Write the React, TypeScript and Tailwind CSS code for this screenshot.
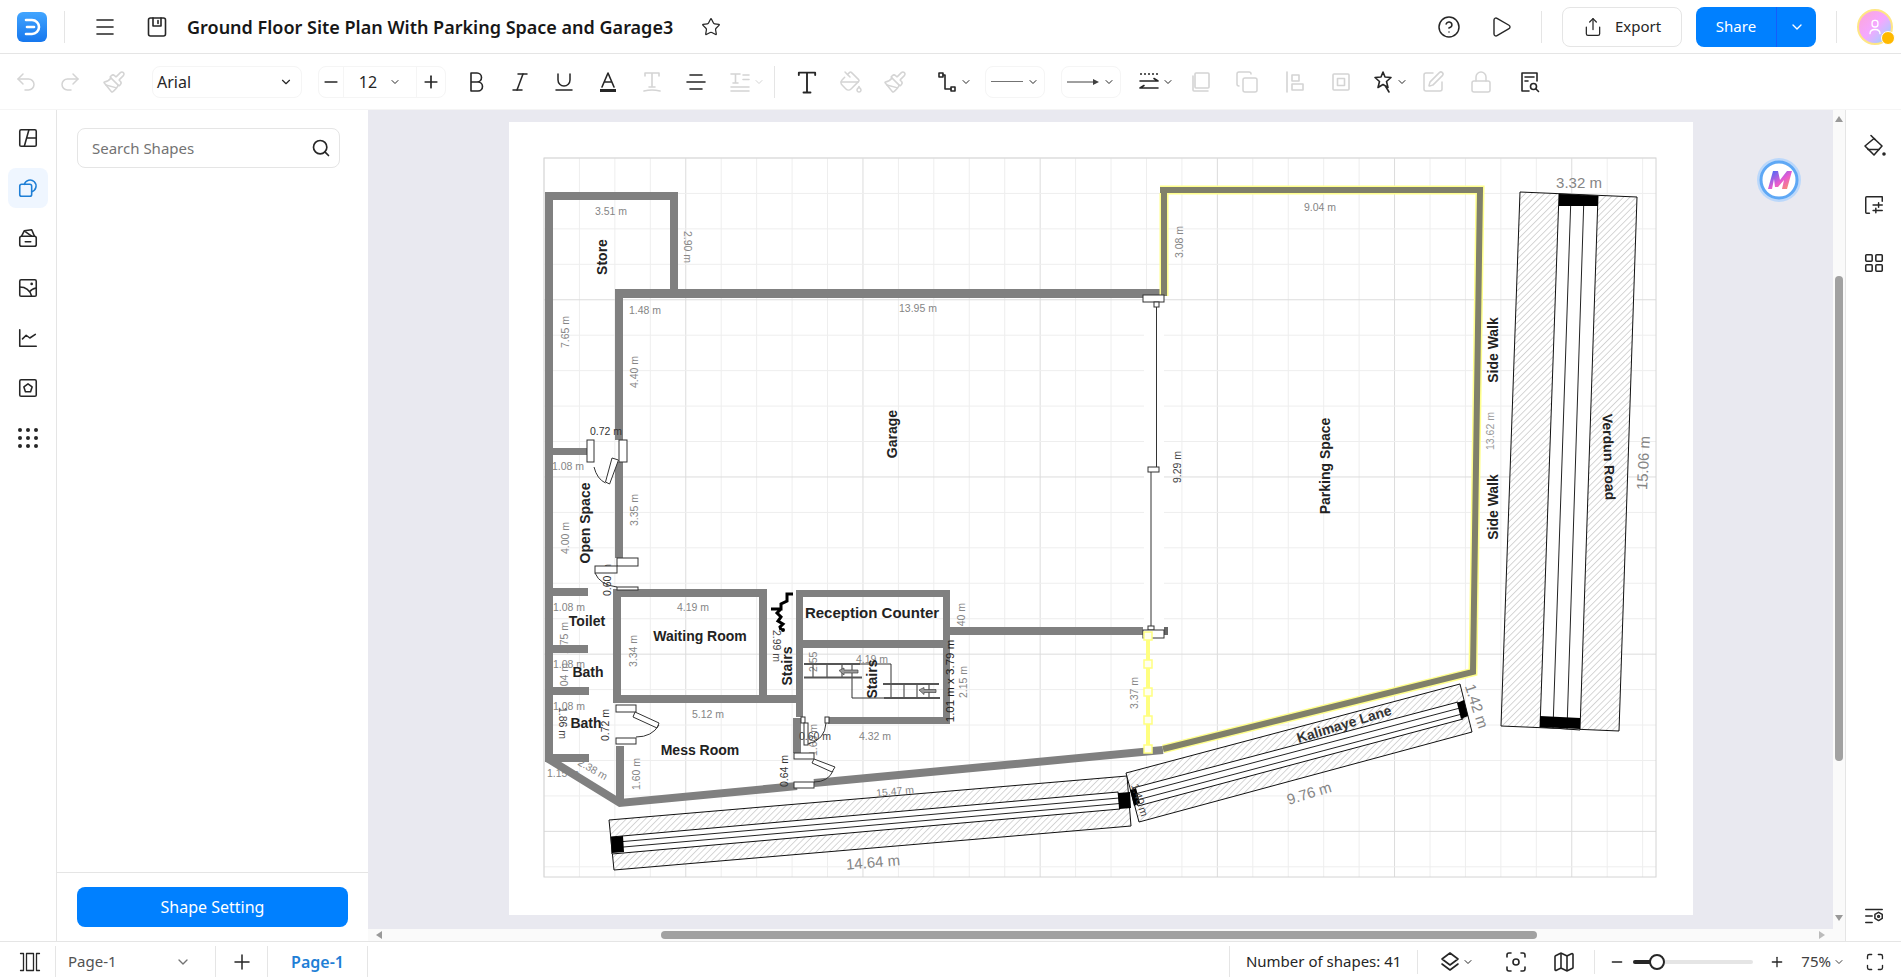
import type { ReactNode } from "react";
import {
  ChevronDown, CircleHelp, Copy, Focus, Italic, LayoutGrid, Lock, Map as MapIcon, Maximize, Menu, Minus, PaintBucket,
  Paintbrush, Play, Plus, Redo2, Search, Share, SquarePen, Star, Underline, Undo2,
} from "lucide-react";

const DISABLED = "text-neutral-300";
const ACTIVE = "text-neutral-800";

function Ico({ children, className = "w-6 h-6", sw = 1.6 }: { children: ReactNode; className?: string; sw?: number }) {
  return (
    <svg viewBox="0 0 24 24" fill="none" stroke="currentColor" strokeWidth={sw} strokeLinecap="round" strokeLinejoin="round" className={className}>
      {children}
    </svg>
  );
}

function Cell({ children, className = "w-11" }: { children: ReactNode; className?: string }) {
  return <div className={`h-11 flex items-center justify-center shrink-0 ${className}`}>{children}</div>;
}

function ChevCell({ children, tone = ACTIVE, className = "w-12" }: { children: ReactNode; tone?: string; className?: string }) {
  return (
    <div className={`h-11 flex items-center justify-center gap-px shrink-0 ${tone} ${className}`}>
      {children}
      <ChevronDown className="w-3 h-3" />
    </div>
  );
}

function Header() {
  return (
    <header className="h-[54px] shrink-0 flex items-center border-b border-neutral-200 pl-4 pr-2">
      <svg viewBox="0 0 32 32" className="w-8 h-8">
        <defs>
          <linearGradient id="lg" x1="0" y1="0" x2="0" y2="1">
            <stop offset="0" stopColor="#42a5ff" />
            <stop offset="1" stopColor="#1677ee" />
          </linearGradient>
        </defs>
        <rect x="1" y="1" width="30" height="30" rx="6" fill="url(#lg)" />
        <path d="M10 9h6a7 7 0 0 1 0 14h-6" fill="none" stroke="#fff" strokeWidth="2.6" strokeLinecap="round" />
        <path d="M11 16h7" stroke="#fff" strokeWidth="2.6" strokeLinecap="round" />
      </svg>
      <div className="w-px h-8 bg-neutral-200 ml-4" />
      <Menu className="w-6 h-6 ml-7 text-neutral-800" strokeWidth={1.6} />
      <Ico className="w-6 h-6 ml-7 text-neutral-800">
        <rect x="3.5" y="3" width="17" height="18" rx="2" />
        <path d="M8 3v8h8V3M13 5.5v3" />
      </Ico>
      <h1 className="ml-4.5 text-lg font-semibold text-neutral-900 whitespace-nowrap">Ground Floor Site Plan With Parking Space and Garage3</h1>
      <Star className="w-5 h-5 ml-7 text-neutral-800" strokeWidth={1.5} />

      <div className="ml-auto flex items-center">
        <CircleHelp className="w-6 h-6 text-neutral-800" strokeWidth={1.5} />
        <Play className="w-6 h-6 ml-7 text-neutral-800" strokeWidth={1.4} />
        <div className="w-px h-8 bg-neutral-200 ml-7" />
        <button className="ml-5 w-30 h-10 flex items-center justify-center gap-3 rounded-lg border border-neutral-200 text-[15px] text-neutral-800">
          <Share className="w-5 h-5" strokeWidth={1.5} />
          Export
        </button>
        <div className="ml-3.5 w-30 h-10 flex items-center rounded-lg bg-[#0080ff] text-white text-[15px]">
          <span className="flex-1 text-center">Share</span>
          <span className="w-10 h-full flex items-center justify-center border-l border-blue-600">
            <ChevronDown className="w-4 h-4" />
          </span>
        </div>
        <div className="w-px h-8 bg-neutral-200 ml-5" />
        <div className="relative ml-5 w-9 h-9 rounded-full border-2 border-amber-200 bg-linear-to-br from-pink-300 via-fuchsia-300 to-sky-300 flex items-center justify-center">
          <Ico className="w-5 h-5 text-white">
            <rect x="8.5" y="4" width="7" height="8" rx="3" />
            <path d="M6 20c0-4 3-5 6-5s6 1 6 5" />
          </Ico>
          <span className="absolute -right-1 -bottom-0.5 w-3.5 h-3.5 rounded-full bg-amber-400 border border-white" />
        </div>
      </div>
    </header>
  );
}

function Toolbar() {
  return (
    <div className="h-14 shrink-0 flex items-center border-b border-neutral-100 px-1 text-neutral-800">
      <Cell><Undo2 className={`w-6 h-6 ${DISABLED}`} strokeWidth={1.5} /></Cell>
      <Cell><Redo2 className={`w-6 h-6 ${DISABLED}`} strokeWidth={1.5} /></Cell>
      <Cell><Paintbrush className={`w-6 h-6 ${DISABLED}`} strokeWidth={1.5} /></Cell>

      <div className="ml-4 w-[150px] h-8 flex items-center justify-between rounded-lg border border-neutral-100 px-1 text-base text-neutral-800">
        Arial
        <ChevronDown className="w-3.5 h-3.5 mr-1" />
      </div>
      <div className="ml-4 w-32 h-8 flex items-center rounded-lg border border-neutral-100">
        <span className="w-6 flex justify-center"><Minus className="w-5 h-5" /></span>
        <span className="flex-1 h-full flex items-center justify-center gap-3 border-x border-neutral-100 text-base">
          12
          <ChevronDown className="w-3 h-3" />
        </span>
        <span className="w-7 flex justify-center"><Plus className="w-5 h-5" /></span>
      </div>

      <Cell className="w-11 ml-2">
        <Ico><path d="M7 3h6a4.500 4.500 0 0 1 0 9H7zM7 12h7a4.500 4.500 0 0 1 0 9H7z" /></Ico>
      </Cell>
      <Cell><Italic className="w-6 h-6" strokeWidth={1.5} /></Cell>
      <Cell><Underline className="w-6 h-6" strokeWidth={1.5} /></Cell>
      <Cell>
        <Ico>
          <path d="M6 17 12 3l6 14M8.500 12h7" />
          <rect x="4" y="19" width="16" height="3" fill="currentColor" stroke="none" />
        </Ico>
      </Cell>
      <Cell>
        <Ico className={`w-6 h-6 ${DISABLED}`}>
          <path d="M5 6V3h14v3M12 3v14M9 17h6M4 21q8-2 16 0" />
        </Ico>
      </Cell>
      <Cell><Ico><path d="M6 5h12M3 12h18M6 19h12" /></Ico></Cell>
      <ChevCell tone={DISABLED} className="w-14">
        <Ico>
          <path d="M3 4h9M7.500 4v9M5 13h5M15 5h6M15 9.500h6M3 17h18M3 21h18" />
        </Ico>
      </ChevCell>
      <div className="w-px h-8 bg-neutral-200" />

      <Cell className="w-11 ml-2.5">
        <Ico className="w-7 h-7"><path d="M5 6V4h14v2M12 4v17M9 21h6" /></Ico>
      </Cell>
      <Cell><PaintBucket className={`w-6 h-6 ${DISABLED}`} strokeWidth={1.5} /></Cell>
      <Cell><Paintbrush className={`w-6 h-6 ${DISABLED}`} strokeWidth={1.5} /></Cell>
      <ChevCell className="w-14 ml-2">
        <Ico>
          <rect x="4" y="3" width="4" height="4" />
          <rect x="16" y="17" width="4" height="4" />
          <path d="M8 5h2v14h6" />
        </Ico>
      </ChevCell>
      <div className="ml-1 w-15 h-8 flex items-center justify-center gap-1 rounded-lg border border-neutral-100">
        <span className="w-8 h-px bg-neutral-500" />
        <ChevronDown className="w-3 h-3" />
      </div>
      <div className="ml-4 w-15 h-8 flex items-center justify-center gap-1 rounded-lg border border-neutral-100">
        <svg viewBox="0 0 32 8" className="w-8 h-2">
          <path d="M0 4h27" stroke="#404040" />
          <path d="M26 1l6 3-6 3z" fill="#404040" />
        </svg>
        <ChevronDown className="w-3 h-3" />
      </div>
      <ChevCell className="w-12 ml-2.5">
        <Ico>
          <path d="M3 4h18" strokeDasharray="2 2" strokeLinecap="butt" />
          <path d="M3 11h18M17 8.500 21 11M3 18h18M7 15.500 3 18" />
        </Ico>
      </ChevCell>
      <Cell className="w-11">
        <Ico className={`w-6 h-6 ${DISABLED}`}><rect x="6" y="3" width="14" height="15" rx="1" /><path d="M4 6v14q0 1 1 1h14" /></Ico>
      </Cell>
      <Cell className="w-12"><Copy className={`w-6 h-6 ${DISABLED}`} strokeWidth={1.5} /></Cell>
      <Cell className="w-12">
        <Ico className={`w-6 h-6 ${DISABLED}`}><path d="M4 2v20" /><rect x="9" y="5" width="7" height="6" /><rect x="9" y="14" width="11" height="6" /></Ico>
      </Cell>
      <Cell>
        <Ico className={`w-6 h-6 ${DISABLED}`}><rect x="4" y="4" width="16" height="16" rx="1" /><rect x="8.500" y="8.500" width="7" height="7" /></Ico>
      </Cell>
      <ChevCell className="w-11 ml-1">
        <Ico>
          <path d="m12 2 2 5 6 .500-4.500 4 1.500 6-5-3-5 3 1.500-6L4 7.500 10 7z" />
          <path d="m15 17 3 5" />
        </Ico>
      </ChevCell>
      <Cell><SquarePen className={`w-6 h-6 ${DISABLED}`} strokeWidth={1.5} /></Cell>
      <Cell className="w-11 ml-1"><Lock className={`w-6 h-6 ${DISABLED}`} strokeWidth={1.5} /></Cell>
      <Cell className="w-11 ml-1">
        <Ico>
          <path d="M20 11V3H5v18h7" />
          <path d="M8 7h9M8 11h3" />
          <circle cx="16.500" cy="16.500" r="3" />
          <path d="m19 19 2.500 2.500" />
        </Ico>
      </Cell>
    </div>
  );
}

const railIcons: ReactNode[] = [
  <><rect x="3" y="3" width="18" height="18" rx="1.500" /><path d="M13 3 8 21M11 12h10" /></>,
  <><rect x="3" y="8" width="13" height="13" rx="2" /><path d="M8 8a6.500 6.500 0 1 1 8 8" /></>,
  <><rect x="3" y="10" width="18" height="11" rx="2" /><path d="M9 16h6M5 10l3-6 8-1 3 7M9 5l7 5" /></>,
  <><rect x="3" y="3" width="18" height="18" rx="1.500" /><path d="M3 11q10 0 13 10M14 16q2-3 7-4" /><circle cx="16" cy="7.500" r=".6" fill="currentColor" /></>,
  <><path d="M3 3v18h18" /><path d="m6 13 4-4 4 3 6-4" /></>,
  <><rect x="3" y="3" width="18" height="18" rx="1.500" /><path d="m12 7.500 4.500 3.300-1.700 5.200H9.200l-1.700-5.200z" /></>,
];

function Rail() {
  return (
    <div className="w-14 box-content shrink-0 flex flex-col items-center gap-0.5 pt-1 border-r border-neutral-200 text-neutral-800">
      {railIcons.map((icon, i) => (
        <div key={i} className="h-12 flex items-center justify-center">
          <div className={`w-10 h-10 rounded-lg flex items-center justify-center ${i === 1 ? "bg-blue-50 text-[#1f7fd6]" : ""}`}>
            <Ico className="w-5.5 h-5.5" sw={1.7}>{icon}</Ico>
          </div>
        </div>
      ))}
      <div className="h-12 flex items-center justify-center">
        <div className="grid grid-cols-3 gap-1">
          {Array.from({ length: 9 }).map((_, i) => (
            <span key={i} className="w-1 h-1 rounded-full bg-neutral-800" />
          ))}
        </div>
      </div>
    </div>
  );
}

function ShapePanel() {
  return (
    <aside className="w-[311px] shrink-0 flex flex-col bg-white">
      <div className="flex-1 pt-4.5 pl-5 pr-7">
        <div className="h-10 flex items-center justify-between rounded-lg border border-neutral-200 pl-3.5 pr-2 text-[15px] text-neutral-500">
          Search Shapes
          <Search className="w-5 h-5 text-neutral-800" />
        </div>
      </div>
      <div className="border-t border-neutral-200 pl-5 pr-5 py-3.5">
        <button className="w-full h-10 rounded-lg bg-[#0080ff] text-white text-base">Shape Setting</button>
      </div>
    </aside>
  );
}

const WALL = "#808080";
const MINOR_X = Array.from({ length: 32 }, (_, i) => 544 + i * 35.44);
const MINOR_Y = Array.from({ length: 21 }, (_, i) => 158 + i * 35.44);

// x1, y1, x2, y2
const walls = [
  [545, 192, 678, 200], [545, 192, 553, 762], [670, 192, 678, 298], [615, 289, 1160, 298], [615, 289, 623, 440], [615, 462, 623, 558],
  [545, 448, 588, 455], [545, 588, 588, 596], [545, 645, 588, 653], [545, 687, 589, 695], [545, 754, 589, 762],
  [613, 589, 767, 597], [613, 589, 621, 703], [759, 589, 767, 697], [613, 695, 798, 703],
  [796, 590, 950, 597], [796, 590, 803, 717], [793, 718, 801, 753], [943, 590, 950, 724], [796, 640, 943, 648], [828, 717, 950, 724],
  [950, 627, 1143, 635], [616, 746, 624, 803],
];

// x, y, w, h
const doorRects = [
  [587, 440, 7, 22], [619, 440, 8, 22], [617, 558, 21, 8], [595, 566, 22, 7], [617, 587, 21, 3], [616, 705, 20, 7], [616, 738, 20, 6],
  [794, 753, 20, 6], [794, 782, 20, 6], [801, 717, 4, 6], [825, 717, 4, 6], [804, 723, 4, 22], [1143, 295, 21, 7], [1154, 302, 5, 5],
  [1148, 467, 11, 5], [1148, 626, 6, 4], [1143, 630, 21, 8],
];

const doorLeaves = [
  "612,458 618.500,460 609.600,484 605.500,482",
  "635,712 659,723 657,728 633,717",
  "814,759 835,767 832,772 812,763",
];

const doorArcs = [
  "M594 467Q597 479 605.500 483",
  "M595 573Q600 585 617 587",
  "M636 737Q652 737 659 725",
  "M814 782Q828 782 833 771",
  "M808 744Q825 740 826 723",
];

type Label = { t: string; x: number; y: number; r?: number; s?: number; c?: string; b?: boolean };

const DIM = "#858585";

// partly hidden by walls and doors in the drawing
const underLabels: Label[] = [
  { t: "2.40 m", x: 961, y: 619, r: -90 }, { t: "1.75 m", x: 564, y: 638, r: -90 }, { t: "1.04 m", x: 564, y: 679, r: -90 },
  { t: "2.55 m", x: 813, y: 656, r: -90 }, { t: "1.15 m", x: 563, y: 773 }, { t: "1.60 m", x: 813, y: 740, r: -90 },
  { t: "0.60 m", x: 607, y: 580, r: -90, c: "#333" },
];

const labels: Label[] = [
  { t: "3.51 m", x: 611, y: 211 }, { t: "1.48 m", x: 645, y: 310 }, { t: "13.95 m", x: 918, y: 308 }, { t: "0.72 m", x: 606, y: 431, c: "#333" },
  { t: "1.08 m", x: 568, y: 466 }, { t: "1.08 m", x: 569, y: 607 }, { t: "4.19 m", x: 693, y: 607 }, { t: "1.08 m", x: 569, y: 664 },
  { t: "1.08 m", x: 569, y: 706 }, { t: "5.12 m", x: 708, y: 714 }, { t: "4.32 m", x: 875, y: 736 }, { t: "4.19 m", x: 872, y: 659 },
  { t: "0.60 m", x: 815, y: 736, c: "#444" }, { t: "2.38 m", x: 593, y: 769, r: 30 },
  { t: "15.47 m", x: 895, y: 791, r: -5 }, { t: "14.64 m", x: 873, y: 862, r: -5, s: 15 }, { t: "9.04 m", x: 1320, y: 207 },
  { t: "3.32 m", x: 1579, y: 182, s: 15 }, { t: "9.76 m", x: 1309, y: 793, r: -17, s: 15 }, { t: "1.42 m", x: 1477, y: 706, r: 72, s: 15 },
  { t: "3.37 m", x: 1134, y: 693, r: -90 }, { t: "1.40 m", x: 1140, y: 800, r: 72, c: "#444", s: 11 },
  { t: "2.90 m", x: 688, y: 247, r: 90 }, { t: "7.65 m", x: 565, y: 332, r: -90 }, { t: "4.40 m", x: 634, y: 372, r: -90 }, { t: "4.00 m", x: 565, y: 538, r: -90 },
  { t: "3.35 m", x: 634, y: 510, r: -90 },
  { t: "3.34 m", x: 633, y: 651, r: -90 }, { t: "2.99 m", x: 777, y: 646, r: 90, c: "#444" },
  { t: "1.01 m x 3.79 m", x: 950, y: 681, r: -90, c: "#222", s: 11.5 }, { t: "2.15 m", x: 963, y: 682, r: -90 },
  { t: "1.86 m", x: 563, y: 723, r: 90, c: "#444" }, { t: "0.72 m", x: 605, y: 725, r: -90, c: "#333" },
  { t: "1.60 m", x: 636, y: 774, r: -90 }, { t: "0.64 m", x: 784, y: 771, r: -90, c: "#333" },
  { t: "3.08 m", x: 1179, y: 242, r: -90 }, { t: "9.29 m", x: 1177, y: 467, r: -90, c: "#444" }, { t: "13.62 m", x: 1490, y: 431, r: -90, c: "#999" },
  { t: "15.06 m", x: 1643, y: 463, r: -87, s: 15 },
  { t: "Store", x: 602, y: 257, r: -90, b: true }, { t: "Garage", x: 892, y: 434, r: -90, b: true }, { t: "Open Space", x: 585, y: 523, r: -90, b: true },
  { t: "Toilet", x: 587, y: 621, b: true }, { t: "Waiting Room", x: 700, y: 636, b: true }, { t: "Reception Counter", x: 872, y: 612, b: true, s: 15 },
  { t: "Bath", x: 588, y: 672, b: true }, { t: "Bath", x: 586, y: 723, b: true }, { t: "Mess Room", x: 700, y: 750, b: true },
  { t: "Stairs", x: 787, y: 666, r: -90, b: true }, { t: "Stairs", x: 872, y: 679, r: -90, b: true }, { t: "Parking Space", x: 1325, y: 466, r: -90, b: true },
  { t: "Side Walk", x: 1493, y: 350, r: -90, b: true }, { t: "Side Walk", x: 1493, y: 507, r: -90, b: true }, { t: "Verdun Road", x: 1609, y: 457, r: 88, b: true },
  { t: "Kalimaye Lane", x: 1344, y: 724, r: -17, b: true, c: "#333" },
];

function PlanText({ l }: { l: Label }) {
  return (
    <text
      x={l.x}
      y={l.y}
      textAnchor="middle"
      dominantBaseline="central"
      fontSize={l.s ?? (l.b ? 14 : 10.5)}
      fontWeight={l.b ? 700 : 400}
      fill={l.c ?? (l.b ? "#222" : DIM)}
      transform={l.r ? `rotate(${l.r} ${l.x} ${l.y})` : undefined}
    >
      {l.t}
    </text>
  );
}

function FloorPlan() {
  return (
    <svg viewBox="509 122 1184 793" className="w-full h-full" fontFamily="Liberation Sans, Arial, sans-serif">
      <defs>
        <pattern id="hatch" width="4.500" height="4.500" patternUnits="userSpaceOnUse" patternTransform="rotate(45)">
          <rect width="4.500" height="4.500" fill="#fff" />
          <path d="M0 0v4.500" stroke="#9a9a9a" strokeWidth="0.8" />
        </pattern>
      </defs>

      {MINOR_X.map((x, i) => (
        <path key={i} d={`M${x} 158V877`} stroke={(i - 4) % 5 === 0 ? "#dcdcdc" : "#eeeeee"} />
      ))}
      {MINOR_Y.map((y, i) => (
        <path key={i} d={`M544 ${y}H1656`} stroke={(i - 4) % 5 === 0 ? "#dcdcdc" : "#eeeeee"} />
      ))}
      <rect x="544" y="158" width="1112" height="719" fill="none" stroke="#d4d4d4" />
      <rect x="1144" y="299" width="20" height="333" fill="#fff" />

      {underLabels.map((l, i) => (
        <PlanText key={i} l={l} />
      ))}

      {walls.map(([x1, y1, x2, y2], i) => (
        <rect key={i} x={x1} y={y1} width={x2 - x1} height={y2 - y1} fill={WALL} />
      ))}
      <path d="M547 758 620 803 797 786" fill="none" stroke={WALL} strokeWidth="8" />
      <path d="M814 783 1163 750" fill="none" stroke={WALL} strokeWidth="8" />
      <rect x="1164" y="627" width="4" height="8" fill="#666" />

      {/* selected wall */}
      <path d="M1163 749 1473 672 1480 190 1160 190M1164 193V296" fill="none" stroke="#ffff8c" strokeWidth="9" />
      <path d="M1163 749 1473 672 1480 190 1160 190M1164 193V296" fill="none" stroke="#80806a" strokeWidth="6" />

      {/* gate */}
      <path d="M1156.500 307V467M1151 472V626" stroke="#333" fill="none" />
      {doorRects.map(([x, y, w, h], i) => (
        <rect key={i} x={x} y={y} width={w} height={h} fill="#fff" stroke="#333" />
      ))}
      {doorLeaves.map((p, i) => (
        <polygon key={i} points={p} fill="#fff" stroke="#333" />
      ))}
      {doorArcs.map((d, i) => (
        <path key={i} d={d} fill="none" stroke="#333" />
      ))}

      {/* stair marker */}
      <path d="M793 594h-6v7l-6 3v5h-10M781 609l-4 4 4 4-3 4 5 3-3 3 1 3" fill="none" stroke="#000" strokeWidth="3" />
      <circle cx="783" cy="630" r="2" fill="#000" />

      {/* stairs */}
      <g fill="none" stroke="#333">
        <path d="M804 664H891V698H852V664M813 664V678M827 664V678M842 664V678" />
        <path d="M891 684H939M904 684V698M917 684V698M929 684V698" />
        <path d="M804 664H860M804 677.500H862M883 684H939M884 698H940" strokeWidth="2" stroke="#555" />
      </g>
      <g fill="#999" stroke="#444" strokeWidth="0.7">
        <path d="M839 670.500l5-2.500v2h14v3h-14v2z" />
        <path d="M919 690l5-2.500v2h12v3h-12v2z" />
      </g>

      {/* yellow door */}
      <path d="M1148 636V749" stroke="#ffff80" strokeWidth="4" />
      {[636, 664, 692, 720, 749].map((y) => (
        <rect key={y} x="1144" y={y - 4} width="8" height="8" fill="#fffff0" stroke="#ffff80" strokeWidth="1.500" />
      ))}

      {/* Verdun Road */}
      <polygon points="1520,192 1637,197 1619,731 1501,726" fill="url(#hatch)" stroke="#111" />
      <polygon points="1559,194 1598,196 1580,730 1540,727" fill="#fff" stroke="#111" />
      <path d="M1571 195 1553 728M1584 195 1567 729" stroke="#222" />
      <polygon points="1559,194 1598,196 1598,206 1559,206" fill="#000" />
      <polygon points="1540,716 1580,718 1580,729 1540,727" fill="#000" />

      {/* bottom road */}
      <polygon points="609,820 1127,776 1131,826 614,870" fill="url(#hatch)" stroke="#111" />
      <polygon points="611,837 1118,792 1120,809 612,854" fill="#fff" stroke="#111" />
      <path d="M612 842.500 1119 798M612 848 1120 803.500" stroke="#222" />
      <polygon points="611,837 623,836 624,852 612,853" fill="#000" />
      <polygon points="1118,793 1130,792 1131,808 1119,809" fill="#000" />

      {/* Kalimaye Lane */}
      <polygon points="1126,773 1460,684 1472,732 1139,822" fill="url(#hatch)" stroke="#111" />
      <polygon points="1133,788 1458,702 1463,719 1138,806" fill="#fff" stroke="#111" />
      <path d="M1135 794 1460 708M1137 800 1462 714" stroke="#222" />
      <polygon points="1130,790 1136,788 1140,803 1134,806" fill="#000" />
      <polygon points="1457,703 1464,700 1468,716 1461,719" fill="#000" />

      {labels.map((l, i) => (
        <PlanText key={i} l={l} />
      ))}
    </svg>
  );
}

function Canvas() {
  return (
    <div className="flex-1 min-h-0 flex">
      <div className="relative flex-1 min-w-0 overflow-hidden bg-[#e9e9f0] pl-[141px] pt-3">
        <div className="w-[1184px] h-[793px] bg-white">
          <FloorPlan />
        </div>
        <svg viewBox="0 0 44 44" className="absolute right-8 top-12 w-11 h-11">
          <defs>
            <linearGradient id="mg" x1="0" y1="0" x2="1" y2="1">
              <stop offset="0" stopColor="#2f6bff" />
              <stop offset="0.55" stopColor="#e85bd0" />
              <stop offset="1" stopColor="#ff9a5a" />
            </linearGradient>
          </defs>
          <circle cx="22" cy="22" r="22" fill="#bcd8fa" />
          <circle cx="22" cy="22" r="18" fill="#fff" stroke="#5ea8f5" strokeWidth="3" />
          <path d="M11 31 16 13h5l2 9 7-9h5l-5 18h-5l2-9-6 7h-3l-1-8-2 10z" fill="url(#mg)" />
        </svg>
      </div>
      <div className="w-3 shrink-0 flex flex-col items-center bg-neutral-50 pt-1.5">
        <svg viewBox="0 0 8 6" className="w-2 h-1.5"><path d="M4 0l4 6H0z" fill="#999" /></svg>
        <div className="mt-[154px] w-2 h-[485px] rounded-full bg-neutral-400" />
        <svg viewBox="0 0 8 6" className="w-2 h-1.5 mt-auto mb-2"><path d="M4 6 8 0H0z" fill="#999" /></svg>
      </div>
    </div>
  );
}

function HScroll() {
  return (
    <div className="h-3 shrink-0 flex items-center bg-neutral-50 pl-2 pr-5">
      <svg viewBox="0 0 6 8" className="w-1.5 h-2"><path d="M0 4l6-4v8z" fill="#999" /></svg>
      <div className="ml-[279px] w-[876px] h-2 rounded-full bg-neutral-400" />
      <svg viewBox="0 0 6 8" className="ml-auto w-1.5 h-2"><path d="M6 4 0 0v8z" fill="#bbb" /></svg>
    </div>
  );
}

function RightPanel() {
  return (
    <div className="w-14 shrink-0 flex flex-col items-center gap-9 pt-6 pb-3.5 border-l border-neutral-200 text-neutral-800">
      <Ico className="w-6 h-6">
        <path d="M12 4.500 20 12l-8 9-9-9z" />
        <path d="M9 1.500 13 5.500M6 15.500h11" />
        <circle cx="22" cy="20" r="1" fill="currentColor" />
      </Ico>
      <Ico className="w-5.5 h-5.5">
        <path d="M21 8V3H4q-1 0-1 1v16q0 1 1 1h3" />
        <path d="M11 12h10M11 18h10M17 9.500v5M14 15.500v5" />
      </Ico>
      <LayoutGrid className="w-5.5 h-5.5" strokeWidth={1.7} />
      <Ico className="w-5.5 h-5.5 mt-auto">
        <path d="M3 5h18M3 12h7M3 19h7" />
        <path d="m17 8 4 2.300v4.400L17 17l-4-2.300v-4.400z" />
        <circle cx="17" cy="12.500" r="1" />
      </Ico>
    </div>
  );
}

function Footer() {
  return (
    <footer className="h-9 shrink-0 flex items-center border-t border-neutral-200 pt-1 text-[15px] text-neutral-700">
      <div className="w-14 h-full flex items-center justify-center border-r border-neutral-200 pl-1">
        <Ico className="w-6 h-6 text-neutral-800" sw={1.3}>
          <rect x="8.500" y="3.500" width="7" height="17" />
          <path d="M2.500 3.500h3v17h-3M21.500 3.500h-3v17h3" />
        </Ico>
      </div>
      <div className="w-40 h-full flex items-center justify-between border-r border-neutral-200 pl-3 pr-6 text-neutral-600">
        Page-1
        <ChevronDown className="w-4 h-4 text-neutral-500" />
      </div>
      <div className="w-13 h-full flex items-center justify-center border-r border-neutral-200">
        <Plus className="w-6 h-6 text-neutral-800" strokeWidth={1.5} />
      </div>
      <div className="w-25 h-full flex items-center justify-center border-r border-neutral-200 text-base font-semibold text-[#1f7fd6]">Page-1</div>

      <div className="ml-auto flex items-center h-full pr-4">
        <div className="h-full flex items-center border-l border-neutral-200 pl-4 pr-4 text-neutral-800">Number of shapes: 41</div>
        <div className="w-px h-6 bg-neutral-200" />
        <Ico className="w-6 h-6 ml-5 text-neutral-800">
          <path d="m12 3 8 6-8 6-8-6z" />
          <path d="m4 14 8 6 8-6" />
        </Ico>
        <ChevronDown className="w-3 h-3 text-neutral-800" />
        <Focus className="w-6 h-6 ml-7.5 text-neutral-800" strokeWidth={1.6} />
        <MapIcon className="w-6 h-6 ml-6 text-neutral-800" strokeWidth={1.6} />
        <div className="w-px h-6 bg-neutral-200 ml-4.5" />
        <Minus className="w-4 h-4 ml-3.5 text-neutral-800" />
        <div className="relative ml-2 w-30 h-1 rounded-full bg-neutral-200">
          <div className="w-1/5 h-full rounded-full bg-neutral-800" />
          <span className="absolute left-4 -top-1.5 w-4 h-4 rounded-full border-2 border-neutral-800 bg-white" />
        </div>
        <Plus className="w-4 h-4 ml-4 text-neutral-800" />
        <span className="ml-4 text-neutral-700">75%</span>
        <ChevronDown className="w-3 h-3 ml-0.5 text-neutral-700" />
        <Maximize className="w-5 h-5 ml-5 text-neutral-800" strokeWidth={1.6} />
      </div>
    </footer>
  );
}

export default function App() {
  return (
    <div className="h-screen w-full flex flex-col overflow-hidden bg-white font-['Noto_Sans','Open_Sans',sans-serif]">
      <Header />
      <Toolbar />
      <div className="flex-1 min-h-0 flex">
        <Rail />
        <ShapePanel />
        <div className="flex-1 min-w-0 flex flex-col">
          <Canvas />
          <HScroll />
        </div>
        <RightPanel />
      </div>
      <Footer />
    </div>
  );
}
